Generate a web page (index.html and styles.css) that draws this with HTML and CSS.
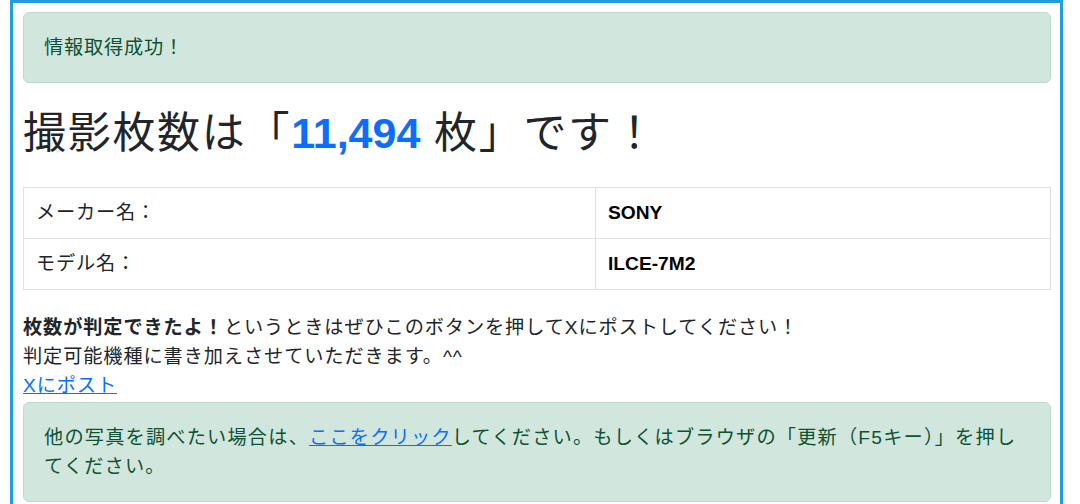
FILE: index.html
```html
<!DOCTYPE html>
<html lang="ja">
<head>
<meta charset="utf-8">
<title>撮影枚数</title>
<link rel="stylesheet" href="styles.css">
</head>
<body>
<div class="frame">
  <div class="alert alert-top">情報取得成功！</div>
  <h1 class="title">撮影枚数は「<span class="count">11,494</span> 枚」です！</h1>
  <table class="info">
    <colgroup><col class="col-label"><col class="col-value"></colgroup>
    <tr><td class="label">メーカー名：</td><td class="value">SONY</td></tr>
    <tr><td class="label">モデル名：</td><td class="value">ILCE-7M2</td></tr>
  </table>
  <p class="note"><strong>枚数が判定できたよ！</strong>というときはぜひこのボタンを押してXにポストしてください！<br>判定可能機種に書き加えさせていただきます。^^<br><a href="#" class="link">Xにポスト</a></p>
  <div class="alert alert-bottom">他の写真を調べたい場合は、<a href="#" class="link">ここをクリック</a>してください。もしくはブラウザの「更新（F5キー）」を押してください。</div>
</div>
</body>
</html>
```
FILE: styles.css
```css
html, body {
  margin: 0;
  padding: 0;
  background: #ffffff;
}
body {
  font-family: "Liberation Sans", "Noto Sans CJK JP", sans-serif;
  font-size: 19.2px;
  line-height: 29px;
  color: #212529;
}
.frame {
  box-sizing: border-box;
  width: 1053px;
  margin-left: 10px;
  border: 3px solid #1fa0dc;
  padding: 9px 9px 0 10px;
  min-height: 520px;
}
.alert {
  background: #d1e7dd;
  border: 1px solid #badbcc;
  border-radius: 6px;
  color: #0f5132;
  padding: 20px 20px;
  letter-spacing: 0.8px;
}
.alert-top {
  margin-bottom: 19px;
}
.alert-bottom {
  letter-spacing: 1.2px;
}
.title {
  margin: 0 0 27px 0;
  padding-top: 5px;
  font-size: 43px;
  line-height: 53px;
  font-weight: 400;
  letter-spacing: 1.7px;
  color: #212529;
}
.count {
  color: #0d6efd;
  font-weight: 700;
  letter-spacing: 0;
}
.info {
  width: 100%;
  border-collapse: collapse;
  margin-bottom: 23px;
}
.col-label { width: 572px; }
.info td {
  border: 1px solid #dee2e6;
  padding: 11px 12px;
  line-height: 28px;
}
.label {
  letter-spacing: 0.8px;
}
.value {
  font-weight: 700;
  color: #000000;
}
.note {
  margin: 0 0 2px 0;
  letter-spacing: 0.9px;
}
.note strong {
  font-weight: 700;
}
.link {
  color: #0d6efd;
  text-decoration: underline;
}
```
